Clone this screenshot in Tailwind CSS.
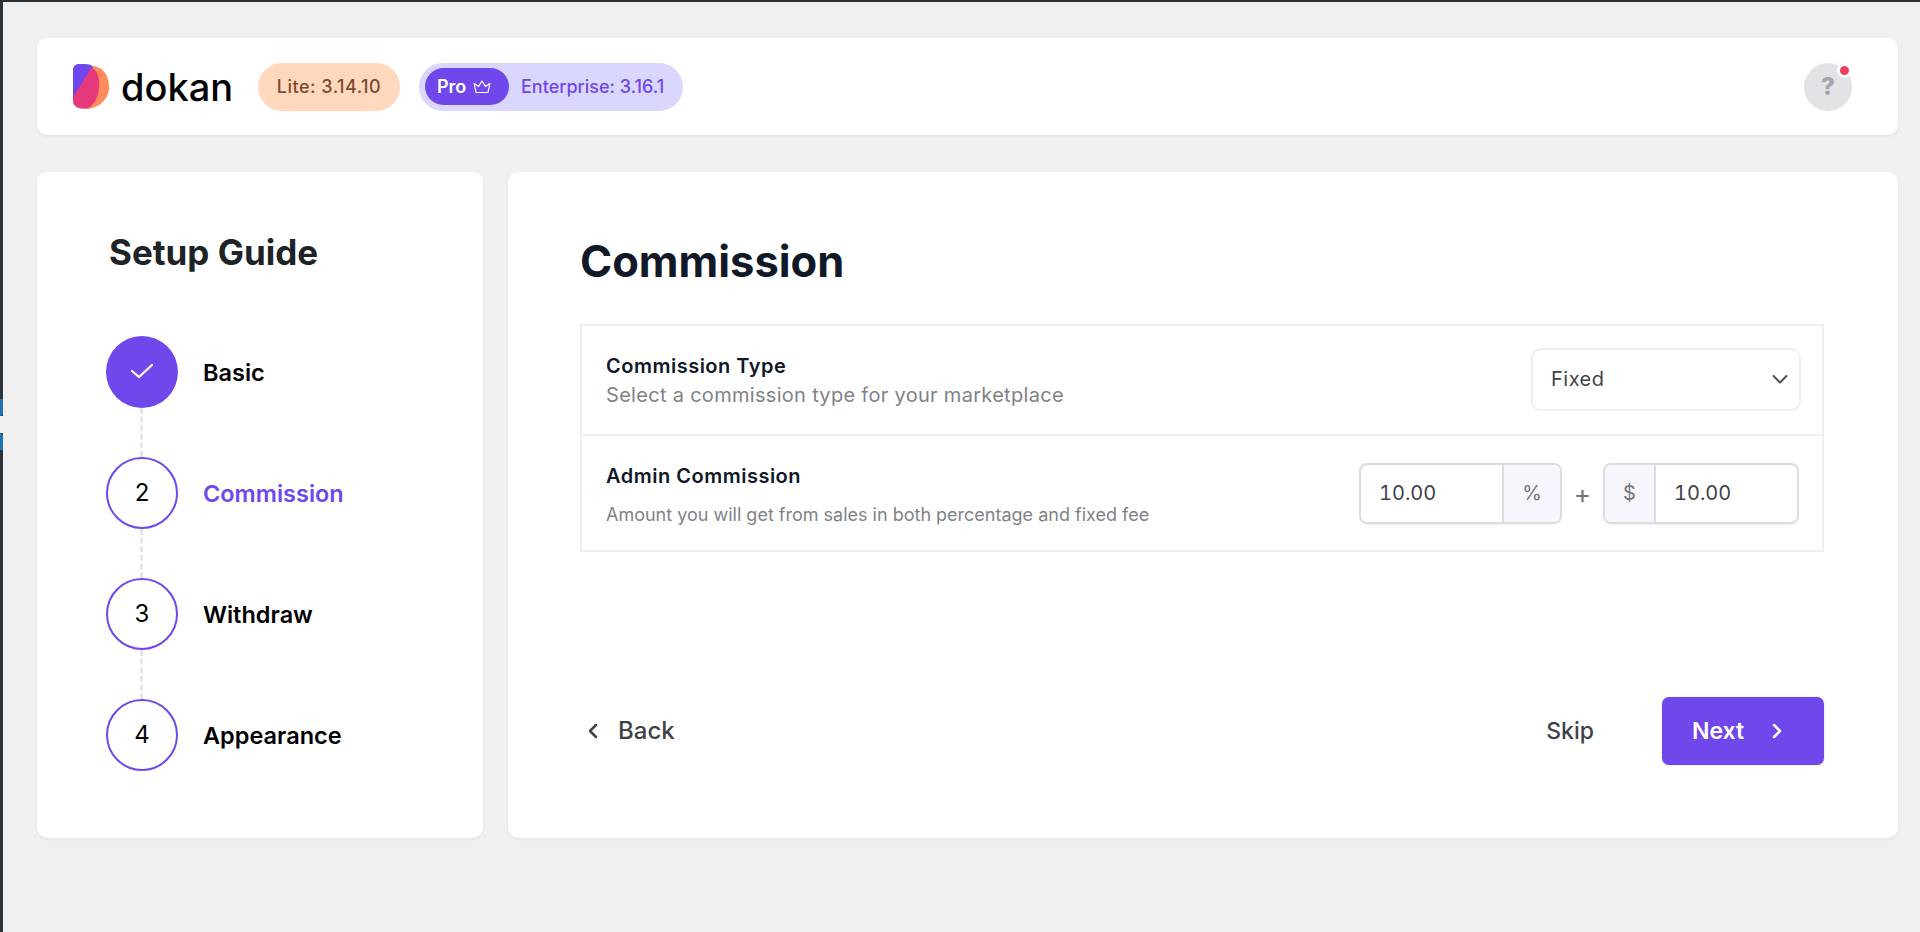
<!DOCTYPE html>
<html lang="en">
<head>
    <meta charset="UTF-8">
    <title>Dokan Setup Guide</title>
    <script src="https://cdn.jsdelivr.net/npm/@tailwindcss/browser@4"></script>
</head>
<body class="relative h-[932px] overflow-hidden bg-[#f0f0f1] font-['Inter',sans-serif]">
    <!-- admin menu edge -->
    <div class="absolute left-0 top-0 h-full w-[3px] bg-[#2c3338]"></div>
    <div class="absolute left-0 top-0 h-[2px] w-full bg-[#2c3338]"></div>
    <div class="absolute left-0 top-[399px] h-[17px] w-[3px] rounded-br-[3px] bg-[#2271b1]"></div>
    <div class="absolute left-0 top-[416px] h-[17px] w-[3px] bg-[#f0f0f1]"></div>
    <div class="absolute left-0 top-[433px] h-[17px] w-[3px] rounded-tr-[3px] bg-[#2271b1]"></div>

    <div class="flex flex-col gap-[37px] pl-[37px] pr-[22px] pt-[38px]">
        <header class="flex h-[97px] items-center justify-between rounded-[10px] bg-white pl-[36px] pr-[46px] shadow-[0_1px_3px_rgba(0,0,0,0.08)]">
            <div class="flex items-center">
                <div class="flex w-[185px] items-center gap-[11px]">
                    <svg class="h-[45px] w-[37px] shrink-0" viewBox="0 0 37 45" fill="none">
                        <path d="M12 45C22 45 37 38 36 21C35 8 27 2 19 2L9 30Z" fill="#ff8a5c"/>
                        <path d="M0 6C0 2 3 0 6 0H12C16 0 19 1 20 3L3 37L0 35Z" fill="#7047eb"/>
                        <path d="M19 3C25 8 27 15 26 24C25 34 21 41 15 44C9 46 0 44 0 37V33Z" fill="#e5397c"/>
                    </svg>
                    <span class="text-[38px] leading-none font-medium text-black">dokan</span>
                </div>
                <div class="flex h-[48px] w-[142px] items-center justify-center rounded-full bg-[#ffd8bd] text-[18px] font-medium tracking-[0.5px] text-[#7d4a2e]">Lite: 3.14.10</div>
                <div class="ml-[19px] flex h-[48px] w-[264px] items-center rounded-full bg-[#d9d7fd] pl-[6px] text-[18px] font-medium text-[#7047eb]">
                    <div class="flex h-[37px] w-[84px] items-center gap-[7px] rounded-full bg-[#7047eb] pl-[12px] font-semibold text-white">
                        Pro
                        <svg class="h-[14px] w-[18px]" viewBox="0 0 18 14" fill="none" stroke="white" stroke-width="1.2" stroke-linejoin="round">
                            <path d="M3 12.500L1.200 3.500L5.500 6.500L9 1L12.500 6.500L16.800 3.500L15 12.500Z"/>
                        </svg>
                    </div>
                    <span class="ml-[12px]">Enterprise: 3.16.1</span>
                </div>
            </div>
            <div class="relative flex h-[48px] w-[48px] items-center justify-center rounded-full bg-[#e2e3e7] text-[24px] font-extrabold text-[#a3a5a9]">
                ?
                <span class="absolute right-0 top-0 h-[15px] w-[15px] rounded-full border-[3px] border-white bg-[#ec3f58]"></span>
            </div>
        </header>

        <div class="flex h-[666px] gap-[25px]">
            <aside class="w-[446px] shrink-0 rounded-[10px] bg-white pl-[69px] pt-[59px] shadow-[0_1px_3px_rgba(0,0,0,0.08)]">
                <h2 class="ml-[3px] text-[35px] leading-[42px] font-bold text-[#1d2327]">Setup Guide</h2>
                <div class="mt-[63px] flex flex-col">
                    <div class="flex items-center gap-[25px]">
                        <div class="flex h-[72px] w-[72px] items-center justify-center rounded-full bg-[#7047eb]">
                            <svg class="h-[22px] w-[22px]" viewBox="0 0 22 22" fill="none" stroke="white" stroke-width="2.200" stroke-linecap="round" stroke-linejoin="round">
                                <path d="M1 10L8 16L21 4"/>
                            </svg>
                        </div>
                        <span class="pt-[2px] text-[23.5px] font-semibold text-black">Basic</span>
                    </div>
                    <div class="ml-[34px] h-[49px] w-0 border-l-[3px] border-dashed border-[#e5e6ea]"></div>
                    <div class="flex items-center gap-[25px]">
                        <div class="flex h-[72px] w-[72px] items-center justify-center rounded-full border-2 border-[#7047eb] text-[24px] text-black">2</div>
                        <span class="pt-[2px] text-[23.5px] font-semibold text-[#7047eb]">Commission</span>
                    </div>
                    <div class="ml-[34px] h-[49px] w-0 border-l-[3px] border-dashed border-[#e5e6ea]"></div>
                    <div class="flex items-center gap-[25px]">
                        <div class="flex h-[72px] w-[72px] items-center justify-center rounded-full border-2 border-[#7047eb] text-[24px] text-black">3</div>
                        <span class="pt-[2px] text-[23.5px] font-semibold text-black">Withdraw</span>
                    </div>
                    <div class="ml-[34px] h-[49px] w-0 border-l-[3px] border-dashed border-[#e5e6ea]"></div>
                    <div class="flex items-center gap-[25px]">
                        <div class="flex h-[72px] w-[72px] items-center justify-center rounded-full border-2 border-[#7047eb] text-[24px] text-black">4</div>
                        <span class="pt-[2px] text-[23.5px] font-semibold text-black">Appearance</span>
                    </div>
                </div>
            </aside>

            <main class="flex-1 rounded-[10px] bg-white pl-[72px] pr-[74px] pt-[60px] shadow-[0_1px_3px_rgba(0,0,0,0.08)]">
                <h1 class="text-[43.500px] leading-[58px] font-bold text-[#111827]">Commission</h1>
                <div class="mt-[34px] border-2 border-[#eeeff1]">
                    <div class="flex h-[110px] items-center justify-between border-b-2 border-[#eeeff1] pl-[24px] pr-[21px]">
                        <div class="pt-[1px]">
                            <div class="text-[20px] leading-[28px] font-semibold tracking-[0.5px] text-[#111827]">Commission Type</div>
                            <div class="text-[20px] leading-[30px] tracking-[0.3px] text-[#7f8287]">Select a commission type for your marketplace</div>
                        </div>
                        <div class="mb-[2px] flex h-[63px] w-[270px] items-center justify-between rounded-[10px] border-2 border-[#eeeff1] pl-[18px] pr-[10px] text-[20px] tracking-[0.5px] text-[#3f4349]">
                            Fixed
                            <svg class="h-[18px] w-[18px]" viewBox="0 0 18 18" fill="none" stroke="#4b4f55" stroke-width="2" stroke-linecap="round" stroke-linejoin="round">
                                <path d="M2.500 6L9 12.500L15.500 6"/>
                            </svg>
                        </div>
                    </div>
                    <div class="flex h-[114px] items-center justify-between pl-[24px] pr-[23px]">
                        <div class="pt-[2px]">
                            <div class="text-[20px] leading-[28px] font-semibold tracking-[0.5px] text-[#111827]">Admin Commission</div>
                            <div class="mt-[13px] text-[18px] leading-[24px] text-[#7f8287]">Amount you will get from sales in both percentage and fixed fee</div>
                        </div>
                        <div class="flex items-center text-[20px] tabular-nums text-[#3f4349]">
                            <div class="flex h-[61px] w-[203px] overflow-hidden rounded-[8px] border-2 border-[#dcdde3] shadow-[0_1px_2px_rgba(0,0,0,0.06)]">
                                <div class="flex flex-1 items-center pl-[18px]">10.00</div>
                                <div class="flex w-[58px] items-center justify-center border-l-2 border-[#dcdde3] bg-[#f6f6fd] text-[#72767c]">%</div>
                            </div>
                            <span class="w-[41px] text-center text-[26px] text-[#72767c]">+</span>
                            <div class="flex h-[61px] w-[196px] overflow-hidden rounded-[8px] border-2 border-[#dcdde3] shadow-[0_1px_2px_rgba(0,0,0,0.06)]">
                                <div class="flex w-[51px] items-center justify-center border-r-2 border-[#dcdde3] bg-[#f6f6fd] text-[#72767c]">$</div>
                                <div class="flex flex-1 items-center pl-[18px]">10.00</div>
                            </div>
                        </div>
                    </div>
                </div>
                <div class="mt-[145px] flex h-[68px] items-center justify-between">
                    <div class="flex items-center gap-[20px] pl-[8px] text-[24px] font-medium text-[#3f4349]">
                        <svg class="h-[16px] w-[10px]" viewBox="0 0 10 16" fill="none" stroke="#3f4349" stroke-width="2.500" stroke-linecap="round" stroke-linejoin="round">
                            <path d="M8 2L2 8L8 14"/>
                        </svg>
                        Back
                    </div>
                    <div class="flex items-center gap-[68px]">
                        <span class="text-[23px] font-medium text-[#3f4349]">Skip</span>
                        <div class="flex h-[68px] w-[162px] items-center gap-[28px] rounded-[7px] bg-[#7047eb] pl-[30px] text-[23px] font-semibold text-white shadow-[0_0_2px_rgba(0,0,0,0.2)]">
                            Next
                            <svg class="h-[16px] w-[10px]" viewBox="0 0 10 16" fill="none" stroke="white" stroke-width="2.500" stroke-linecap="round" stroke-linejoin="round">
                                <path d="M2 2L8 8L2 14"/>
                            </svg>
                        </div>
                    </div>
                </div>
            </main>
        </div>
    </div>
</body>
</html>
